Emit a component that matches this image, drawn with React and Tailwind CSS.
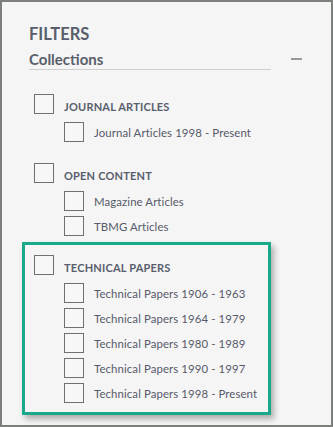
const groups = [
  {
    title: "JOURNAL ARTICLES",
    items: ["Journal Articles 1998 - Present"],
  },
  {
    title: "OPEN CONTENT",
    items: ["Magazine Articles", "TBMG Articles"],
  },
];

const technical = {
  title: "TECHNICAL PAPERS",
  items: [
    "Technical Papers 1906 - 1963",
    "Technical Papers 1964 - 1979",
    "Technical Papers 1980 - 1989",
    "Technical Papers 1990 - 1997",
    "Technical Papers 1998 - Present",
  ],
};

function Box() {
  return (
    <span className="w-[20px] h-[20px] shrink-0 border border-[#707070] bg-[#f7f7f7]"></span>
  );
}

function Group({ group }) {
  return (
    <div className="flex flex-col">
      <label className="flex items-center gap-[10px] h-[20px]">
        <Box />
        <span className="pt-[6px] text-[11px] leading-[14px] font-bold text-[#595e6d] tracking-[0.2px] whitespace-nowrap">
          {group.title}
        </span>
      </label>
      <div className="flex flex-col gap-[5px] mt-[8px] pl-[30px]">
        {group.items.map((item) => (
          <label key={item} className="flex items-center gap-[10px] h-[20px]">
            <Box />
            <span className="pt-[2px] text-[11.4px] leading-[14px] text-[#555a69] tracking-[0.1px] whitespace-nowrap">
              {item}
            </span>
          </label>
        ))}
      </div>
    </div>
  );
}

export default function App() {
  return (
    <div
      className="w-[333px] h-[427px] border-2 border-[#7b807d] bg-[#f5f5f5] overflow-hidden"
      style={{ fontFamily: "Lato, sans-serif" }}
    >
      <div className="pl-[27px] pt-[21px]">
        <h1 className="text-[16.5px] leading-[22px] font-bold text-[#5a5e6b]">FILTERS</h1>
        <div className="flex items-center mt-[5px]">
          <h2 className="w-[242px] border-b border-[#cfcfcf] text-[15px] leading-[19px] font-bold text-[#5a5e6b]">
            Collections
          </h2>
          <span className="ml-[20px] mb-[2px] w-[11px] h-[2px] bg-[#9a9a9a]"></span>
        </div>
      </div>

      <div className="ml-[20px] w-[249px] mt-[24px] flex flex-col">
        <div className="pl-[12px] flex flex-col gap-[21px]">
          {groups.map((g) => (
            <Group key={g.title} group={g} />
          ))}
        </div>
        <div className="mt-[6px] border-[3px] border-[#19a98a] pl-[9px] pt-[10px] pb-[9px] shadow-[3px_4px_6px_rgba(0,0,0,0.3)]">
          <Group group={technical} />
        </div>
      </div>
    </div>
  );
}
